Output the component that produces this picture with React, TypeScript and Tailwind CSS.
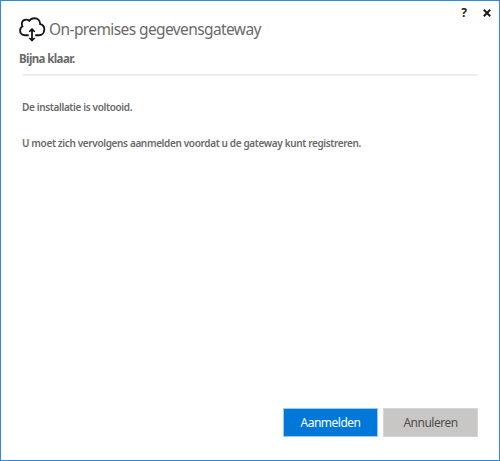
function CloudGatewayIcon() {
  return (
    <svg className="h-[26px] w-[28px] shrink-0" viewBox="18 16 28 26" fill="none" stroke="#161616">
      <path
        d="M28.7 35.2H25C22 35.2 20.1 33.2 20.1 30.7C20.1 28.7 21 27.2 22.4 26.5C20.9 23.2 22.4 20 25.4 19.7C26.8 19.4 28.2 19.9 29.3 20.8C30.5 19 32.4 18.2 34.5 18.2C37.8 18.2 40.2 20.5 40.2 24.1C42.8 24.6 44.3 26.7 44.3 29.4C44.3 32.7 42 35.2 38.8 35.2H35.2"
        strokeWidth="1.9"
      />
      <path d="M32 30V40" strokeWidth="1.8" />
      <path d="M29 31.4L32 28.2L35 31.4ZM29 38.2L32 41.4L35 38.2Z" fill="#161616" stroke="none" />
      <path d="M29.2 31.7L32 28.9L34.8 31.7M29.2 37.9L32 40.7L34.8 37.9" strokeWidth="1.3" />
    </svg>
  );
}

function TitleBar() {
  return (
    <div className="flex h-[15px] items-start justify-end pr-[8px] text-[#1c1c1c]">
      <button aria-label="Help" className="mt-[4px] mr-[15px] h-4 w-[8px] text-[12px] leading-4 font-bold">
        ?
      </button>
      <button aria-label="Sluiten" className="mt-[8px]">
        <svg className="h-[8px] w-[8px]" viewBox="0 0 8 8" stroke="currentColor" strokeWidth="2">
          <path d="M0.8 0.8L7.2 7.2M7.2 0.8L0.8 7.2" />
        </svg>
      </button>
    </div>
  );
}

export default function App() {
  return (
    <div className="flex h-[461px] w-[500px] flex-col border border-[#2f8bd8] bg-white font-['Noto_Sans',sans-serif] text-[#6a6a6a]">
      <TitleBar />
      <header className="flex h-[26px] items-center pl-[17px]">
        <CloudGatewayIcon />
        <h1 className="ml-[3px] text-[15.5px] leading-[26px] tracking-[-0.6px] whitespace-nowrap">
          On-premises gegevensgateway
        </h1>
      </header>
      <h2 className="mt-[9px] ml-[18px] text-[11.5px] leading-4 font-bold tracking-[-0.6px]">Bijna klaar.</h2>
      <hr className="mt-[7px] mr-[21px] ml-[22px] h-[2px] border-0 bg-[#ececec]" />
      <main className="flex-1 pl-[21px] text-[10px] leading-4 font-semibold tracking-[-0.36px] whitespace-nowrap">
        <p className="mt-[23px]">De installatie is voltooid.</p>
        <p className="mt-[20px]">U moet zich vervolgens aanmelden voordat u de gateway kunt registreren.</p>
      </main>
      <footer className="mr-[21px] mb-[23px] flex justify-end gap-[5px] text-[12px] leading-[26px] tracking-[-0.5px]">
        <button className="h-[29px] w-[95px] border border-[#9dcbf0] bg-[#0078d9] text-white">Aanmelden</button>
        <button className="h-[29px] w-[95px] border border-[#d6d5d4] bg-[#c8c7c5] text-[#505050]">Annuleren</button>
      </footer>
    </div>
  );
}
